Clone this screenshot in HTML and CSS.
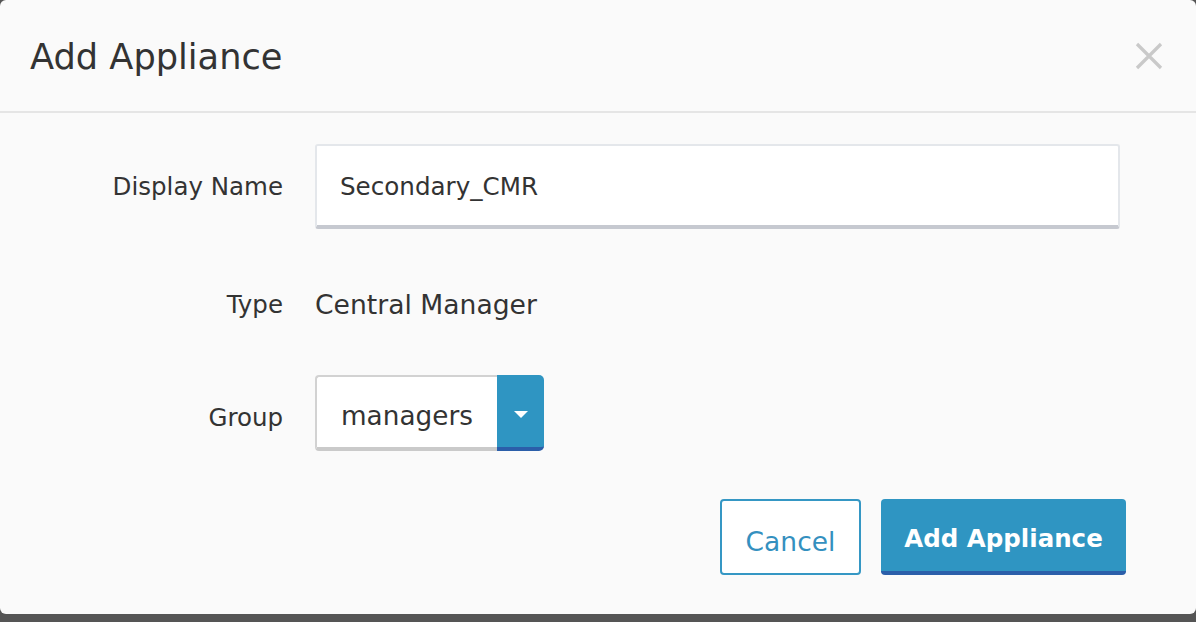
FILE: index.html
```html
<!DOCTYPE html>
<html>
<head>
<meta charset="utf-8">
<link rel="stylesheet" href="styles.css">
</head>
<body>
<div class="modal">
  <div class="modal-header">
    <h1 class="modal-title">Add Appliance</h1>
    <button class="close" aria-label="Close">
      <svg width="28" height="28" viewBox="0 0 28 28"><path d="M2 2 L26 26 M26 2 L2 26" stroke="#c9c9c9" stroke-width="3.2" fill="none"/></svg>
    </button>
  </div>
  <div class="modal-body">
    <div class="form">
      <label class="label">Display Name</label>
      <div class="field"><div class="input">Secondary_CMR</div></div>
      <label class="label row-type">Type</label>
      <div class="field row-type"><span class="value">Central Manager</span></div>
      <label class="label label-group">Group</label>
      <div class="field">
        <div class="select">
          <span class="select-value">managers</span>
          <span class="select-btn"><span class="caret"></span></span>
        </div>
      </div>
    </div>
    <div class="actions">
      <button class="btn btn-cancel">Cancel</button>
      <button class="btn btn-primary">Add Appliance</button>
    </div>
  </div>
</div>
</body>
</html>
```
FILE: styles.css
```css
html, body {
  margin: 0;
  padding: 0;
  background: #555555;
  height: 622px;
  overflow: hidden;
}
body {
  font-family: "DejaVu Sans", "Lucida Grande", sans-serif;
  color: #333333;
}
.modal {
  width: 1196px;
  height: 614px;
  background: #fafafa;
  border-radius: 6px;
  display: flex;
  flex-direction: column;
}
.modal-header {
  height: 111px;
  border-bottom: 2px solid #e5e5e5;
  display: flex;
  align-items: center;
  justify-content: space-between;
  padding: 0 33px 0 30px;
  box-sizing: content-box;
}
.modal-title {
  margin: 0;
  font-weight: normal;
  font-size: 35.2px;
  color: #333;
  padding-top: 2px;
}
.close {
  background: none;
  border: 0;
  padding: 0;
  width: 28px;
  height: 28px;
  display: flex;
}
.modal-body {
  flex: 1;
  display: flex;
  flex-direction: column;
  padding: 31px 70px 0 0;
}
.form {
  display: grid;
  grid-template-columns: 283px 1fr;
  column-gap: 32px;
  row-gap: 45px;
  padding-right: 6px;
}
.label {
  font-size: 24.5px;
  text-align: right;
  display: flex;
  align-items: center;
  justify-content: flex-end;
}
.label-group {
  padding-top: 9px;
}
.row-type {
  height: 56px;
  padding-top: 4px;
  box-sizing: border-box;
}
.field {
  display: flex;
  align-items: center;
}
.input {
  flex: 1;
  box-sizing: border-box;
  background: #fff;
  border: 2px solid #e4e7eb;
  border-bottom: 4px solid #c6c9d0;
  border-radius: 3px;
  font-size: 24.6px;
  padding: 2px 0 0 23px;
  display: flex;
  align-items: center;
  height: 85px;
}
.value {
  font-size: 26.6px;
}
.select {
  display: flex;
  height: 76px;
}
.select-value {
  width: 182px;
  box-sizing: border-box;
  background: #fff;
  border: 2px solid #d2d2d2;
  border-right: 0;
  border-bottom: 4px solid #cacaca;
  border-radius: 4px 0 0 4px;
  font-size: 26.3px;
  display: flex;
  align-items: center;
  padding: 8px 0 0 24px;
}
.select-btn {
  width: 47px;
  background: #2f95c2;
  border-bottom: 4px solid #2b5ea9;
  border-radius: 0 5px 5px 0;
  display: flex;
  align-items: center;
  justify-content: center;
  box-sizing: border-box;
}
.caret {
  width: 0;
  height: 0;
  border-left: 7px solid transparent;
  border-right: 7px solid transparent;
  border-top: 7px solid #fff;
  margin-top: 6px;
}
.actions {
  display: flex;
  justify-content: flex-end;
  gap: 20px;
  margin-top: 48px;
}
.btn {
  height: 76px;
  box-sizing: border-box;
  font-family: inherit;
  border-radius: 4px;
  cursor: pointer;
}
.btn-cancel {
  width: 141px;
  background: #fff;
  color: #3490bf;
  border: 2px solid #3597c4;
  font-size: 26.5px;
  padding-top: 10px;
}
.btn-primary {
  width: 245px;
  background: #2f95c2;
  color: #fff;
  border: 0;
  border-bottom: 4px solid #2b5ea9;
  font-weight: bold;
  font-size: 24.5px;
  padding-top: 8px;
}
```
